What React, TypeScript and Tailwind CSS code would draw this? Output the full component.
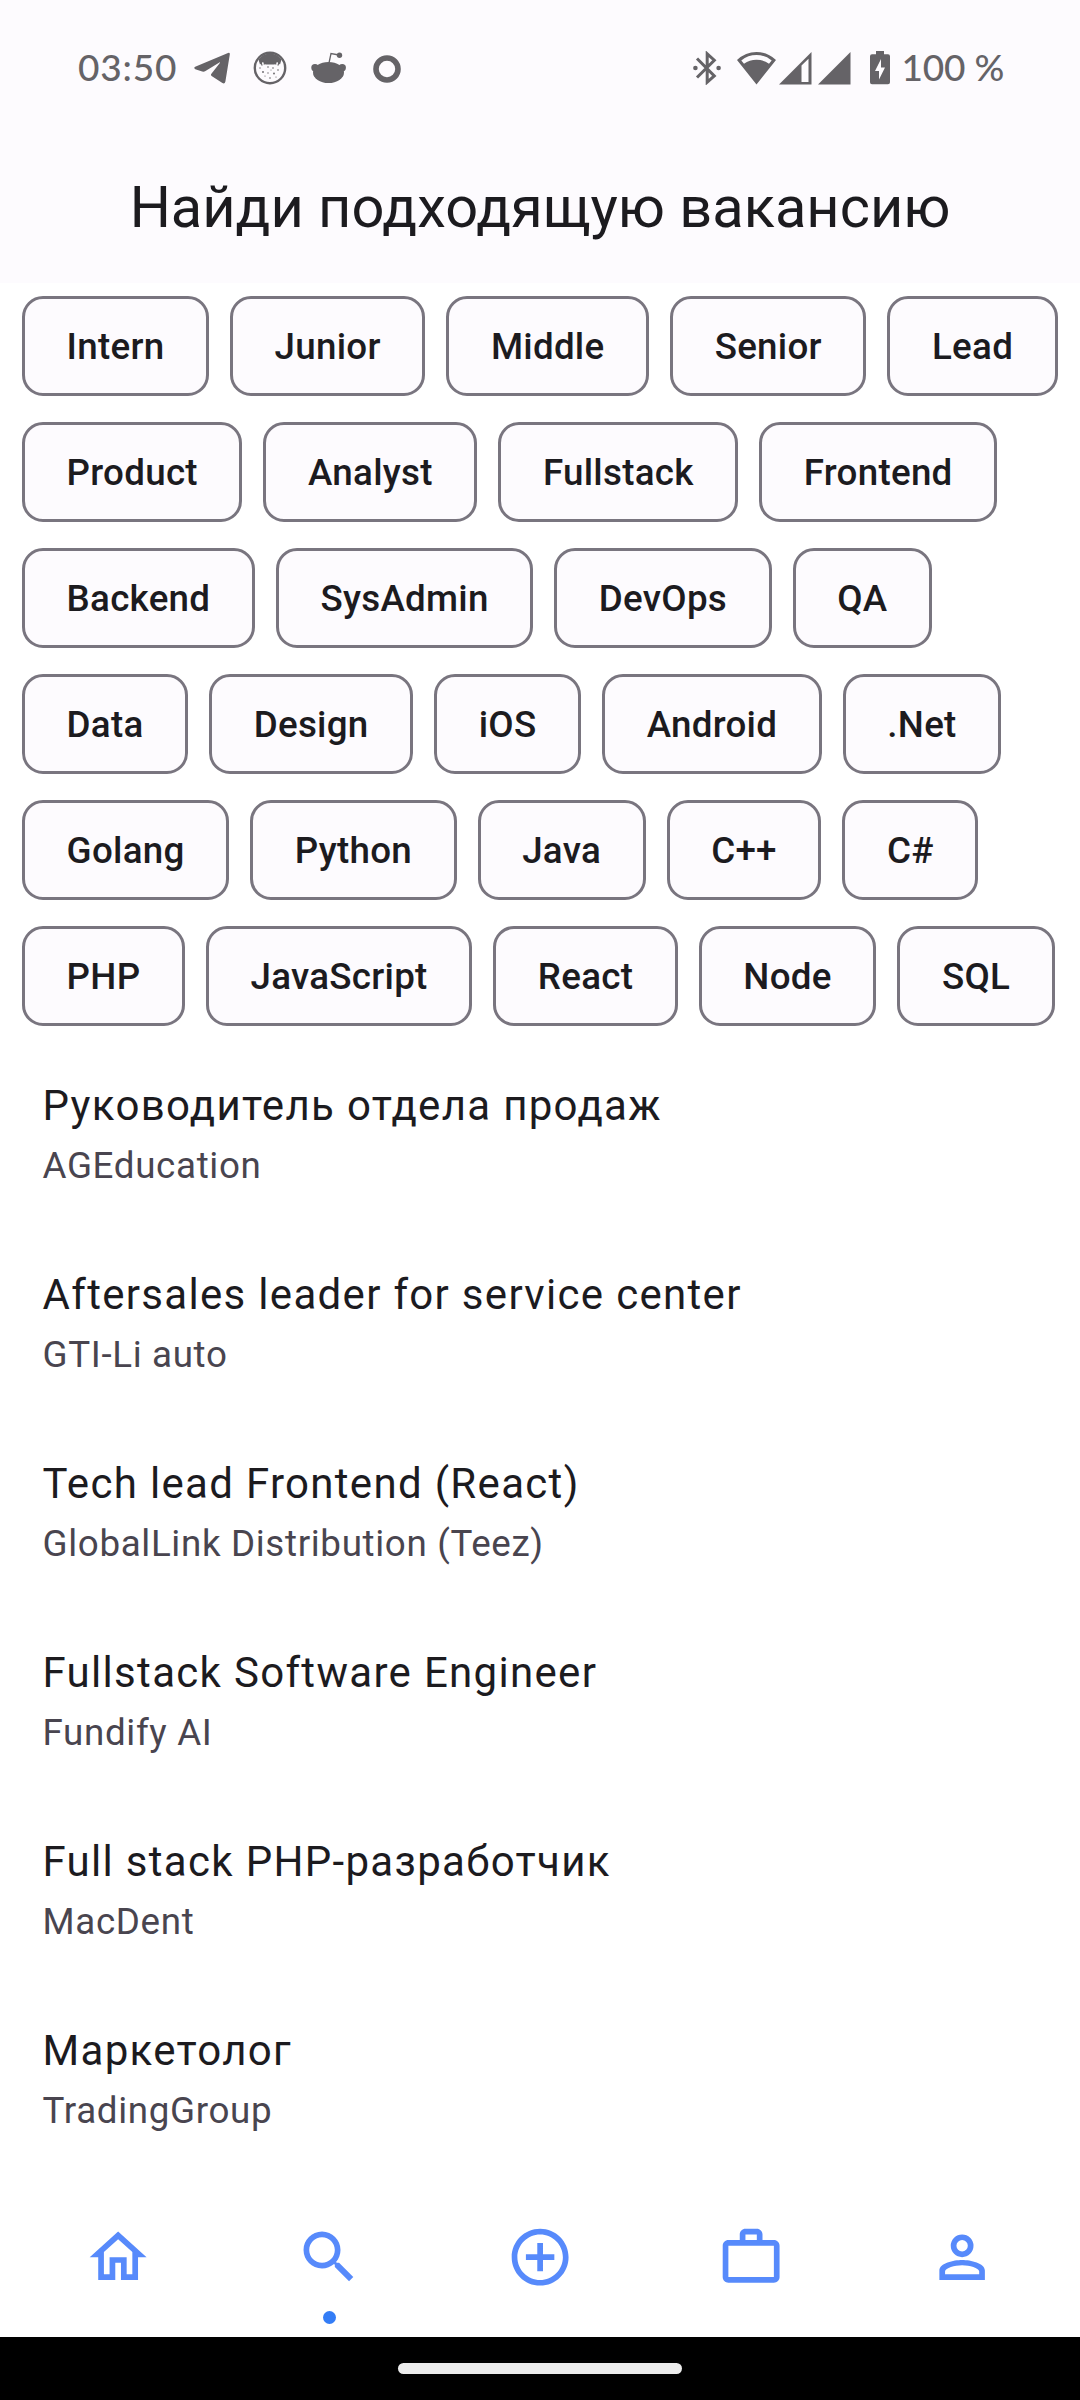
import React from "react";

const chipRows = [
  ["Intern", "Junior", "Middle", "Senior", "Lead"],
  ["Product", "Analyst", "Fullstack", "Frontend"],
  ["Backend", "SysAdmin", "DevOps", "QA"],
  ["Data", "Design", "iOS", "Android", ".Net"],
  ["Golang", "Python", "Java", "C++", "C#"],
  ["PHP", "JavaScript", "React", "Node", "SQL"],
];

const vacancies = [
  { title: "Руководитель отдела продаж", company: "AGEducation" },
  { title: "Aftersales leader for service center", company: "GTI-Li auto" },
  { title: "Tech lead Frontend (React)", company: "GlobalLink Distribution (Teez)" },
  { title: "Fullstack Software Engineer", company: "Fundify AI" },
  { title: "Full stack PHP-разработчик", company: "MacDent" },
  { title: "Маркетолог", company: "TradingGroup" },
];

const navIcons = [
  {
    name: "Home",
    path: "M12 5.69l5 4.5V18h-2v-6H9v6H7v-7.81l5-4.5M12 3L2 12h3v8h6v-6h2v6h6v-8h3L12 3z",
  },
  {
    name: "Search",
    path: "M15.5 14h-.79l-.28-.27C15.41 12.59 16 11.11 16 9.5 16 5.91 13.09 3 9.5 3S3 5.91 3 9.5 5.91 16 9.5 16c1.61 0 3.09-.59 4.23-1.57l.27.28v.79l5 4.99L20.49 19l-4.99-5zm-6 0C7.01 14 5 11.99 5 9.5S7.01 5 9.5 5 14 7.01 14 9.5 11.99 14 9.5 14z",
    active: true,
  },
  {
    name: "Add",
    path: "M13 7h-2v4H7v2h4v4h2v-4h4v-2h-4V7zm-1-5C6.48 2 2 6.48 2 12s4.48 10 10 10 10-4.48 10-10S17.52 2 12 2zm0 18c-4.41 0-8-3.59-8-8s3.59-8 8-8 8 3.59 8 8-3.59 8-8 8z",
  },
  {
    name: "Work",
    path: "M14 6V4h-4v2h4zM4 8v11h16V8H4zm16-2c1.11 0 2 .89 2 2v11c0 1.11-.89 2-2 2H4c-1.11 0-2-.89-2-2l.01-11c0-1.11.88-2 1.99-2h4V4c0-1.11.89-2 2-2h4c1.11 0 2 .89 2 2v2h4z",
  },
  {
    name: "Profile",
    path: "M12 4a4 4 0 1 0 0 8 4 4 0 0 0 0-8zm0 2a2 2 0 1 1 0 4 2 2 0 0 1 0-4zM12 13C9 13 4 14.100 4 16.700V20h16v-3.300C20 14.100 15 13 12 13zm0 1.900c2.700 0 5.800 1 6 2.100v1.050H6V17c.2-1.100 3.300-2.100 6-2.100z",
  },
];

function NotificationIcons() {
  return (
    <div className="flex items-center text-[#656367]">
      <svg className="ml-[18px] h-8 w-9" viewBox="0 0 36 32" fill="currentColor">
        <path d="M1.200 14.800 34 1q2-.8 1.800 1.400L31.400 29.500q-.6 2.800-3 1.600L17.600 24q-1.400-1 0-2.600L26 10.800q.4-.9-.6-.4L11.500 19q-1.500 1-3.300.5L1.300 17.200q-2-1.200-.1-2.400z" />
      </svg>
      <svg className="ml-[23px] h-[34px] w-[34px]" viewBox="0 0 34 34">
        <circle cx="17" cy="17" r="15.200" fill="none" stroke="currentColor" strokeWidth="2.400" />
        <path d="M5.500 8.500Q10 2.500 17 2.500t11.500 6l-1.500 5-2.800-2.500-2.700 2.500h-9L9.800 11 7 13.500z" fill="currentColor" />
        <path d="M8.500 10.500q-.5 3 .8 4M12 11l-1 2.500M25.500 10.500q.5 3-.8 4M22 11l1 2.500" fill="none" stroke="currentColor" strokeWidth="1.300" />
        <g fill="currentColor">
          <circle cx="15" cy="16" r=".8" /><circle cx="20" cy="17" r=".8" /><circle cx="10" cy="21" r=".9" />
          <circle cx="15" cy="22" r=".7" /><circle cx="21" cy="22.500" r=".9" /><circle cx="25" cy="19" r=".8" />
          <circle cx="7" cy="17" r=".7" /><circle cx="17" cy="27" r=".8" /><circle cx="12" cy="25" r=".6" />
          <circle cx="23" cy="26" r=".6" /><circle cx="18" cy="19" r=".5" />
        </g>
      </svg>
      <svg className="ml-[24px] h-8 w-9" viewBox="0 0 36 32" fill="currentColor">
        <ellipse cx="17.500" cy="20.500" rx="15.500" ry="10.500" />
        <circle cx="4" cy="15.700" r="3.700" />
        <circle cx="31.200" cy="15.700" r="3.700" />
        <circle cx="28.500" cy="3.200" r="2.700" />
        <path d="M18 11 20 1.600 28 3" fill="none" stroke="currentColor" strokeWidth="1.300" />
      </svg>
      <svg className="mt-px ml-[26px] h-7 w-7" viewBox="0 0 28 28">
        <circle cx="14" cy="14" r="11" fill="none" stroke="currentColor" strokeWidth="5.600" />
      </svg>
    </div>
  );
}

function SystemIcons() {
  return (
    <div className="flex items-center text-[#656367]">
      <svg className="h-[34px] w-7" viewBox="0 0 28 34" fill="none" stroke="currentColor" strokeWidth="3">
        <path d="M4 7.500 21.300 25 14.200 31.200V2.800L21.300 9.200 4 26.500" />
        <circle cx="2.400" cy="17" r="2.300" fill="currentColor" stroke="none" />
        <circle cx="25.600" cy="17" r="2.300" fill="currentColor" stroke="none" />
      </svg>
      <svg className="ml-4 h-[34px] w-[39px]" viewBox="0 0 39 34" fill="currentColor">
        <path fillRule="evenodd" d="M0 9Q8.500 1 19.500 1T39 9L19.500 33.500zM4.300 9.400 7 12.800Q12.500 8.700 19.500 8.700t12.500 4.100l2.700-3.400Q28 4 19.500 4T4.300 9.400z" />
      </svg>
      <svg className="ml-[3px] h-[34px] w-[33px]" viewBox="0 0 33 34" fill="currentColor">
        <path fillRule="evenodd" d="M0 33.500 32.500 1v32.500zM22.500 14.500V31h7V7.700z" />
      </svg>
      <svg className="ml-[6px] h-[34px] w-[33px]" viewBox="0 0 33 34" fill="currentColor">
        <path d="M0 33.500 32.500 1v32.500z" />
      </svg>
      <svg className="ml-[19px] h-[34px] w-5" viewBox="0 0 20 34" fill="currentColor">
        <path fillRule="evenodd" d="M6 0h8v3.200h4q2 0 2 2v26q0 2-2 2H2q-2 0-2-2v-26q0-2 2-2h4zM11 8 5 20h4v8.500L15 16.500h-4z" />
      </svg>
    </div>
  );
}

export default function App() {
  return (
    <div className="flex h-[2400px] w-[1080px] flex-col overflow-hidden bg-white font-['Roboto',sans-serif] text-[#1c1b1f]">
      <header className="flex h-[283px] shrink-0 flex-col bg-[#fdfbfe]">
        <div className="flex h-[136px] items-center justify-between pr-[76px] pl-[78px] font-['Lato',sans-serif] text-[37px] text-[#656367]">
          <div className="flex items-center">
            <span className="w-[98px] pb-[2px] font-medium tracking-[0.8px] whitespace-nowrap">03:50</span>
            <NotificationIcons />
          </div>
          <div className="flex items-center">
            <SystemIcons />
            <span className="ml-[11px] pb-[2px] font-medium tracking-[-0.2px] whitespace-nowrap">100 %</span>
          </div>
        </div>
        <h1 className="flex h-[144px] items-center justify-center text-[57.75px] leading-[73.5px] font-normal">
          Найди подходящую вакансию
        </h1>
      </header>

      <section className="flex flex-col gap-[26px] pt-[13px] pl-[22px]">
        {chipRows.map((row) => (
          <div key={row[0]} className="flex h-[100px] gap-[21px]">
            {row.map((label) => (
              <button
                key={label}
                className="flex h-[100px] items-center rounded-[21px] border-[3px] border-[#79757f] bg-[#fdfbfe] px-[41.6px] pt-[2px] text-[36.75px] leading-[52.5px] font-medium tracking-[0.2625px] whitespace-nowrap"
              >
                {label}
              </button>
            ))}
          </div>
        ))}
      </section>

      <ul className="flex min-h-0 flex-1 flex-col overflow-hidden pt-[22px]">
        {vacancies.map((v) => (
          <li key={v.title} className="flex h-[189px] shrink-0 flex-col gap-[3px] px-[42.5px] pt-[26px]">
            <span className="text-[42px] leading-[63px] tracking-[1.3125px]">{v.title}</span>
            <span className="text-[36.75px] leading-[52.5px] tracking-[0.656px] text-[#49454f]">{v.company}</span>
          </li>
        ))}
      </ul>

      <nav className="flex h-[147px] shrink-0 justify-between bg-white px-[13px]">
        {navIcons.map((item) => (
          <button key={item.name} aria-label={item.name} className="flex w-[210.75px] flex-col items-center pt-[32.500px]">
            <svg className="h-[68.25px] w-[68.25px] fill-[#578afb]" viewBox="0 0 24 24">
              <path d={item.path} />
            </svg>
            {item.active && <span className="mt-[20px] h-[13px] w-[13px] rounded-full bg-[#347df6]" />}
          </button>
        ))}
      </nav>

      <footer className="flex h-[63px] shrink-0 items-center justify-center bg-black">
        <div className="h-[11px] w-[284px] rounded-full bg-[#ececec]" />
      </footer>
    </div>
  );
}
